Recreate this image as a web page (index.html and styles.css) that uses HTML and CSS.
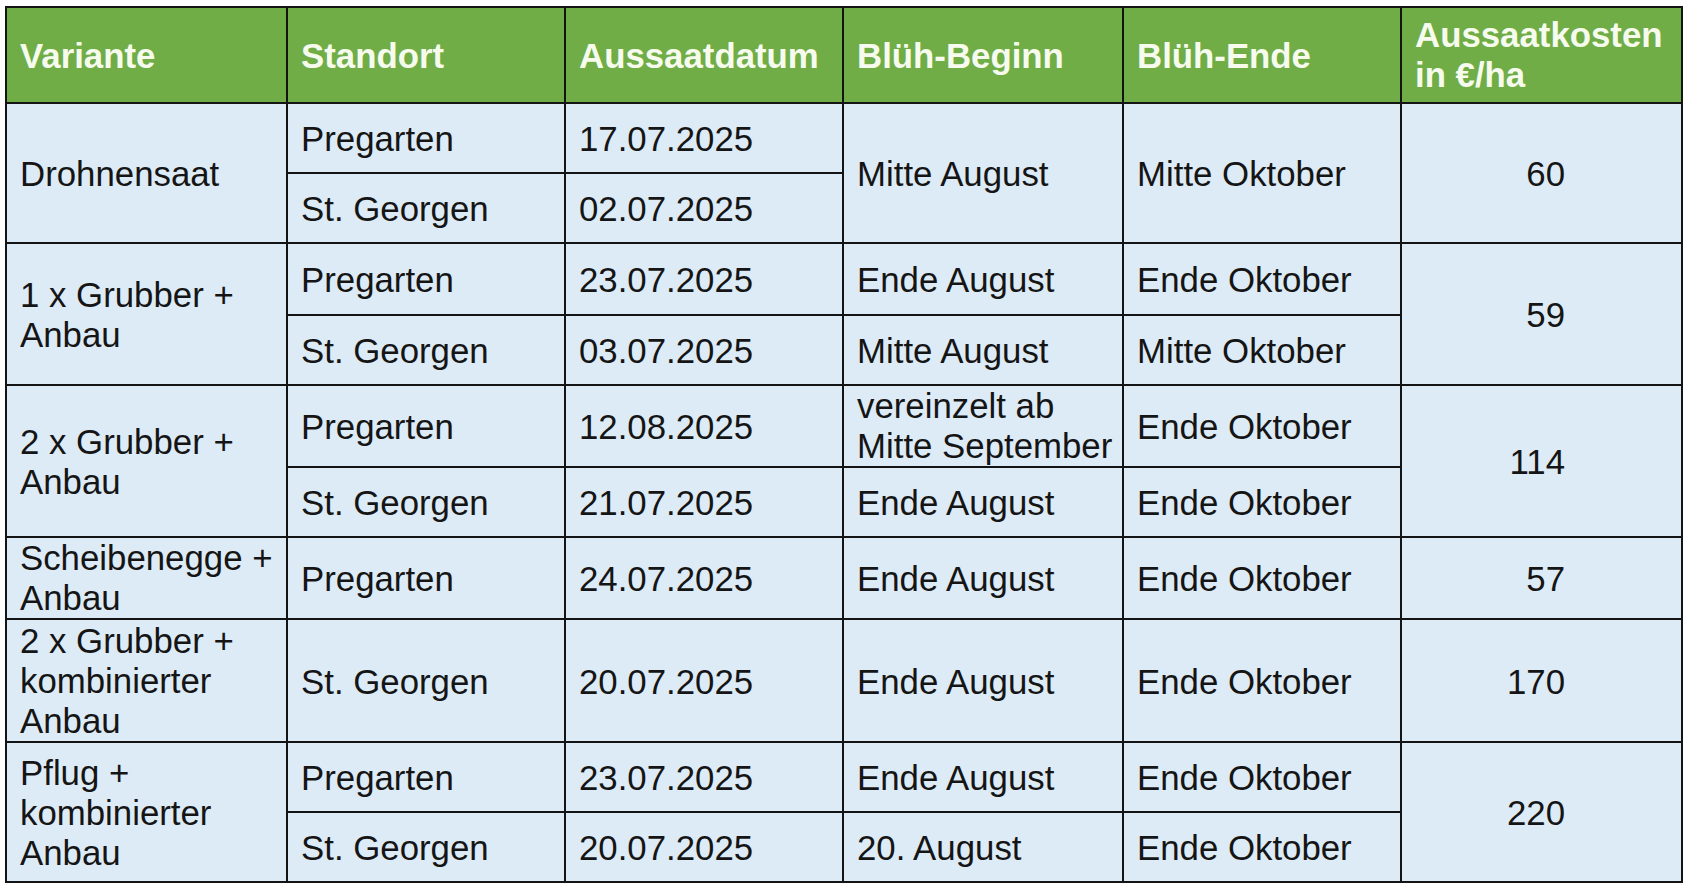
FILE: index.html
```html
<!DOCTYPE html>
<html lang="de">
<head>
<meta charset="utf-8">
<title>Aussaatvarianten</title>
<link rel="stylesheet" href="styles.css">
</head>
<body>
<table class="sheet">
  <thead>
    <tr class="r-head">
      <th class="c1">Variante</th>
      <th class="c2">Standort</th>
      <th class="c3">Aussaatdatum</th>
      <th class="c4">Blüh-Beginn</th>
      <th class="c5">Blüh-Ende</th>
      <th class="c6 wrap">Aussaatkosten in €/ha</th>
    </tr>
  </thead>
  <tbody>
    <tr class="r70">
      <td rowspan="2">Drohnensaat</td>
      <td>Pregarten</td>
      <td>17.07.2025</td>
      <td rowspan="2">Mitte August</td>
      <td rowspan="2">Mitte Oktober</td>
      <td rowspan="2" class="cost">60</td>
    </tr>
    <tr class="r70">
      <td>St. Georgen</td>
      <td>02.07.2025</td>
    </tr>
    <tr class="r72">
      <td rowspan="2">1 x Grubber + Anbau</td>
      <td>Pregarten</td>
      <td>23.07.2025</td>
      <td>Ende August</td>
      <td>Ende Oktober</td>
      <td rowspan="2" class="cost">59</td>
    </tr>
    <tr class="r70">
      <td>St. Georgen</td>
      <td>03.07.2025</td>
      <td>Mitte August</td>
      <td>Mitte Oktober</td>
    </tr>
    <tr class="r82">
      <td rowspan="2">2 x Grubber + Anbau</td>
      <td>Pregarten</td>
      <td>12.08.2025</td>
      <td class="wrap">vereinzelt ab Mitte September</td>
      <td>Ende Oktober</td>
      <td rowspan="2" class="cost">114</td>
    </tr>
    <tr class="r70">
      <td>St. Georgen</td>
      <td>21.07.2025</td>
      <td>Ende August</td>
      <td>Ende Oktober</td>
    </tr>
    <tr class="r82">
      <td class="wrap">Scheibenegge + Anbau</td>
      <td>Pregarten</td>
      <td>24.07.2025</td>
      <td>Ende August</td>
      <td>Ende Oktober</td>
      <td class="cost">57</td>
    </tr>
    <tr class="r123">
      <td class="wrap">2 x Grubber + kombinierter Anbau</td>
      <td>St. Georgen</td>
      <td>20.07.2025</td>
      <td>Ende August</td>
      <td>Ende Oktober</td>
      <td class="cost">170</td>
    </tr>
    <tr class="r70">
      <td rowspan="2">Pflug + kombinierter Anbau</td>
      <td>Pregarten</td>
      <td>23.07.2025</td>
      <td>Ende August</td>
      <td>Ende Oktober</td>
      <td rowspan="2" class="cost">220</td>
    </tr>
    <tr class="r70">
      <td>St. Georgen</td>
      <td>20.07.2025</td>
      <td>20. August</td>
      <td>Ende Oktober</td>
    </tr>
  </tbody>
</table>
</body>
</html>
```
FILE: styles.css
```css
html, body {
  margin: 0;
  padding: 0;
  background: #ffffff;
}

body {
  font-family: "Liberation Sans", Arial, sans-serif;
  color: #151515;
}

.sheet {
  box-sizing: border-box;
  width: 1678px;
  margin: 6px 0 0 5px;
  table-layout: fixed;
  border-collapse: separate;
  border-spacing: 0;
  border-left: 2px solid #141414;
  border-top: 2px solid #141414;
  font-size: 34.8px;
  line-height: 40px;
}

.sheet th,
.sheet td {
  box-sizing: border-box;
  border-right: 2px solid #141414;
  border-bottom: 2px solid #141414;
  padding: 2px 5px 0 13px;
  vertical-align: middle;
  text-align: left;
  background: #ddebf7;
}

.sheet th {
  background: #70ad47;
  color: #f6fbee;
  font-weight: bold;
}

.sheet .wrap { padding-top: 0; }

.c1 { width: 281px; }
.c2 { width: 278px; }
.c3 { width: 278px; }
.c4 { width: 280px; }
.c5 { width: 278px; }
.c6 { width: 281px; }

.sheet td.cost {
  text-align: right;
  padding-right: 116px;
}

.r-head { height: 96px; }
.r70 { height: 70px; }
.r72 { height: 72px; }
.r82 { height: 82px; }
.r123 { height: 123px; }
```
